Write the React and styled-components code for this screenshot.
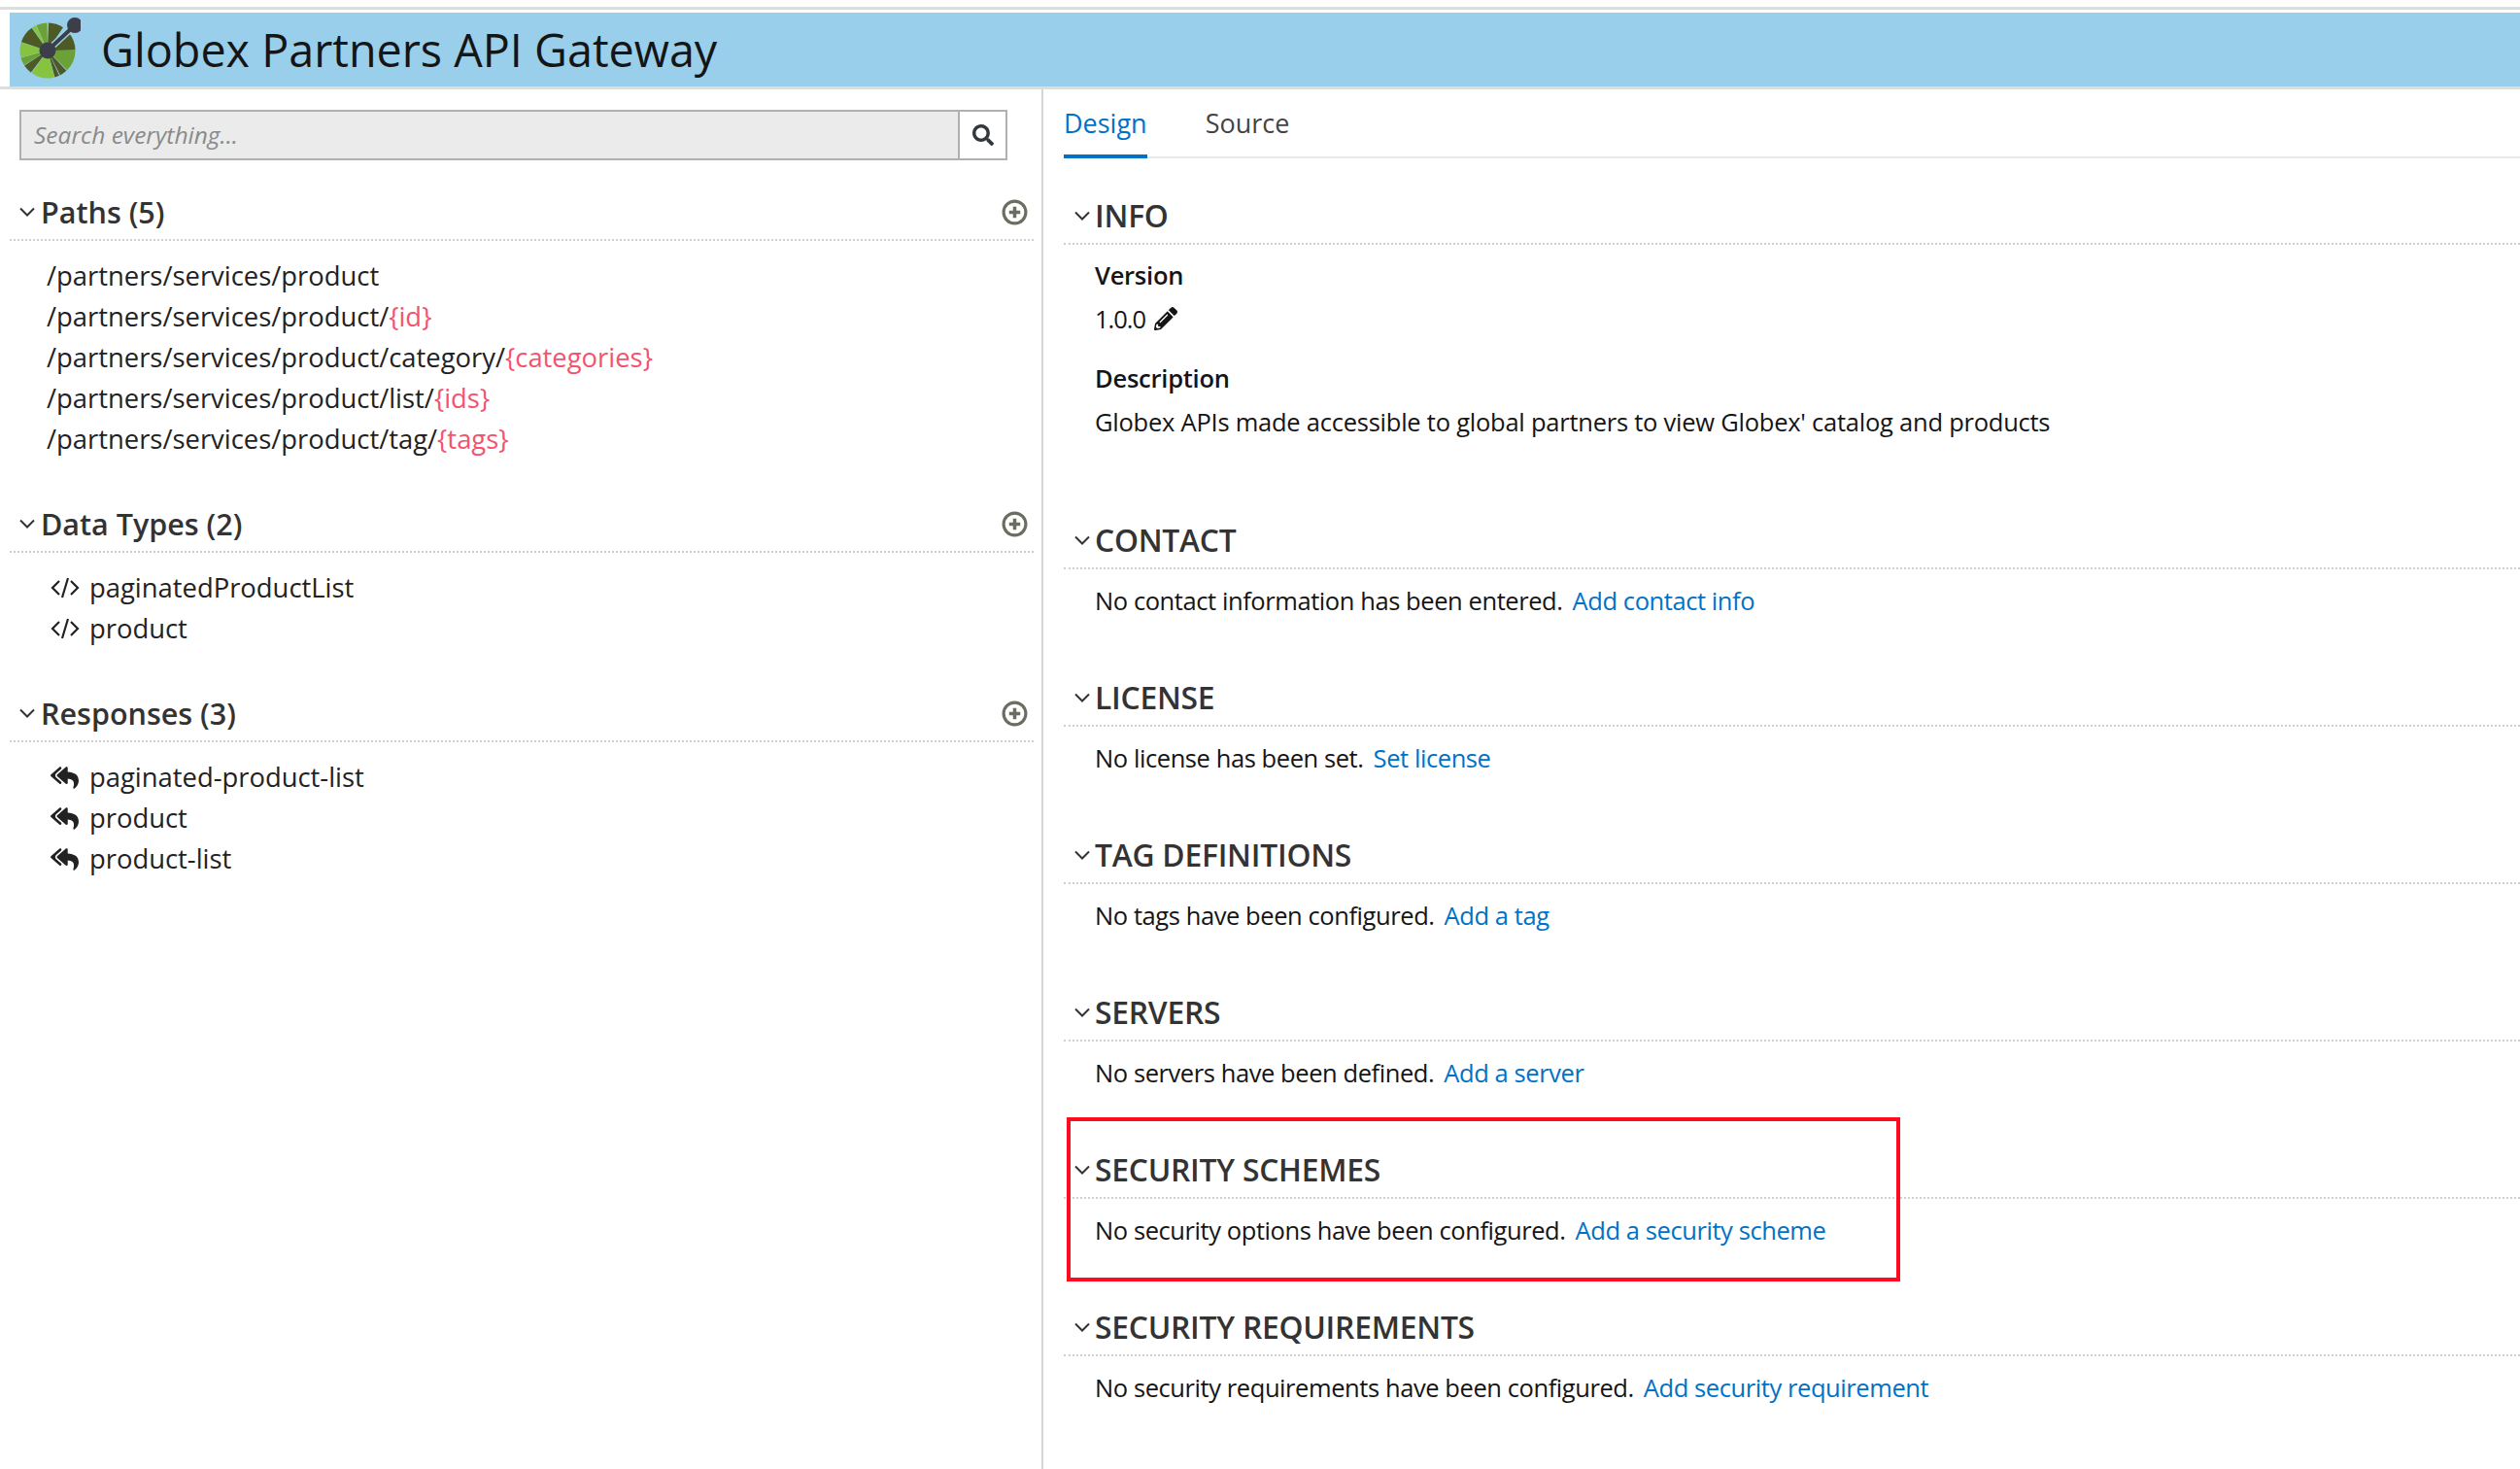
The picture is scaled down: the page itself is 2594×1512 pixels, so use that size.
import styled, { createGlobalStyle } from 'styled-components';
import { FaSearch, FaReplyAll, FaPencilAlt } from 'react-icons/fa';

const FONT = '"Open Sans", "Liberation Sans", sans-serif';

const GlobalStyle = createGlobalStyle`
  html, body {
    margin: 0;
    background: #fff;
  }
  body {
    font-family: ${FONT};
    font-size: 27.4px;
    line-height: 42px;
    color: #151515;
  }
`;

const Page = styled.div`
  height: 1512px;
  overflow: hidden;
  display: flex;
  flex-direction: column;
  padding-top: 7px;
  box-sizing: border-box;
`;

const TopBar = styled.header`
  border-top: 3px solid #dddddd;
  border-bottom: 3px solid #dddddd;
  padding: 3px 0 0 10px;
  flex: none;
`;

const Banner = styled.div`
  height: 76px;
  background: #99cfeb;
  display: flex;
  align-items: center;
  gap: 21px;
  padding-left: 7px;
  font-size: 46.7px;
  color: #151515;
`;

const Body = styled.div`
  flex: 1;
  display: grid;
  grid-template-columns: 1074px 1fr;
`;

const Sidebar = styled.aside`
  border-right: 2px solid #d5d5d5;
  padding: 21px 8px 0 10px;
`;

const Search = styled.div`
  display: flex;
  height: 52px;
  width: 1017px;
  margin: 0 0 27px 10px;
  box-sizing: border-box;
  border: 2px solid #b0b0b0;
`;

const SearchText = styled.div`
  flex: 1;
  background: #ebebeb;
  color: #8a8a8a;
  font-style: italic;
  font-size: 24.5px;
  padding-left: 13px;
  line-height: 48px;
`;

const SearchButton = styled.div`
  width: 47px;
  border-left: 2px solid #b0b0b0;
  display: flex;
  align-items: center;
  justify-content: center;
  color: #33383d;
  font-size: 22px;
`;

const Head = styled.div`
  height: 56px;
  box-sizing: border-box;
  border-bottom: 2px dotted #cfcfcf;
  display: flex;
  align-items: center;
  gap: ${(p) => p.$gap}px;
  padding-left: ${(p) => p.$indent}px;
  padding-bottom: ${(p) => p.$lift}px;
  font-size: ${(p) => p.$size}px;
  font-weight: 600;
  color: #333;
`;

const HeadTitle = styled.span`
  flex: 1;
`;

const AddIcon = styled.svg`
  width: 27px;
  height: 27px;
  margin-right: 6px;
  flex: none;
`;

const Group = styled.section`
  margin-bottom: 40px;
`;

const Rows = styled.div`
  padding: 15px 0 0 38px;
`;

const Row = styled.div`
  display: flex;
  align-items: center;
  height: 42px;
  color: #222;
`;

const Param = styled.span`
  color: #f4536f;
`;

const RowIcon = styled.span`
  width: 40px;
  margin-left: 4px;
  flex: none;
  display: flex;
  align-items: center;
  font-size: 29px;
  color: #222;
`;

const Main = styled.main`
  padding-left: 21px;
`;

const Tabs = styled.nav`
  height: 71px;
  box-sizing: border-box;
  border-bottom: 2px solid #e8e8e8;
  display: flex;
  gap: 60px;
  font-size: 27px;
`;

const Tab = styled.div`
  height: 71px;
  box-sizing: border-box;
  padding-top: 14px;
  color: ${(p) => (p.$active ? '#0072c6' : '#444')};
  border-bottom: ${(p) => (p.$active ? '4px solid #0072c6' : 'none')};
`;

const Sections = styled.div`
  padding-top: 33px;
  font-size: 25.5px;
  letter-spacing: -0.24px;
`;

const Section = styled.section`
  position: relative;
  height: ${(p) => p.$height}px;
`;

const SectionBody = styled.div`
  padding: ${(p) => p.$top}px 0 0 32px;
`;

const Label = styled.div`
  font-weight: 600;
  height: 42px;
`;

const ValueRow = styled.div`
  display: flex;
  align-items: center;
  gap: 9px;
  height: 42px;
  margin: 3px 0 19px;
  letter-spacing: -1px;
  svg {
    font-size: 24px;
  }
`;

const Text = styled.div`
  height: 42px;
  margin-top: 3px;
  white-space: nowrap;
  letter-spacing: ${(p) => (p.$tight ? '-0.42px' : 'inherit')};
`;

const Link = styled.a`
  color: #0072c6;
  margin-left: 10px;
`;

const Highlight = styled.div`
  position: absolute;
  left: 3px;
  top: -28px;
  width: 858px;
  height: 169px;
  box-sizing: border-box;
  border: 4px solid #ff0a1f;
`;

const Chevron = () => (
  <svg width="16" height="10" viewBox="0 0 16 10" fill="none" stroke="#333" strokeWidth="2">
    <path d="M1 1.5 L8 8.5 L15 1.5" />
  </svg>
);

const Plus = () => (
  <AddIcon viewBox="0 0 26 26">
    <circle cx="13" cy="13" r="11" fill="none" stroke="#6a6e60" strokeWidth="3" />
    <path d="M13 7.5 V18.5 M7.5 13 H18.5" stroke="#6a6e60" strokeWidth="3.4" />
  </AddIcon>
);

const CodeIcon = () => (
  <svg width="30" height="22" viewBox="0 0 30 22" fill="none" stroke="#222" strokeWidth="2.2">
    <path d="M9 4 L2 11 L9 18 M21 4 L28 11 L21 18 M18 1 L12 21" />
  </svg>
);

function wedge(a0, a1) {
  const pt = (a, r) => {
    const t = ((a - 90) * Math.PI) / 180;
    return `${(48 + r * Math.cos(t)).toFixed(2)} ${(53 + r * Math.sin(t)).toFixed(2)}`;
  };
  return `M${pt(a0, 6)} L${pt(a0, 28.5)} A28.5 28.5 0 0 1 ${pt(a1, 28.5)} L${pt(a1, 6)} Z`;
}

const DARK = '#4d5a26';
const MID = '#6ba136';
const BRIGHT = '#86c440';

const LOGO_SEGMENTS = [
  [2, 34, DARK], [50, 89, DARK], [90, 135, MID], [137, 153, DARK], [155, 165, DARK],
  [166, 215, BRIGHT], [217, 237, DARK], [238, 255, MID], [256, 287, BRIGHT],
  [288, 325, DARK], [326, 335, BRIGHT], [336, 359, MID],
];

const Logo = () => (
  <svg width="66" height="70" viewBox="16 17 66 70">
    {LOGO_SEGMENTS.map(([a0, a1, fill]) => (
      <path key={a0} d={wedge(a0, a1)} fill={fill} />
    ))}
    <path d="M48 53 L76 27" stroke="#99cfeb" strokeWidth="7" />
    <path d="M48 53 L76 27" stroke="#3c3f4a" strokeWidth="4" />
    <circle cx="48" cy="53" r="8.5" fill="#3c3f4a" />
    <circle cx="76" cy="27" r="8" fill="#3c3f4a" />
  </svg>
);

const PATHS = [
  ['/partners/services/product', ''],
  ['/partners/services/product/', '{id}'],
  ['/partners/services/product/category/', '{categories}'],
  ['/partners/services/product/list/', '{ids}'],
  ['/partners/services/product/tag/', '{tags}'],
];

const EMPTY_SECTIONS = [
  ['CONTACT', 'No contact information has been entered.', 'Add contact info'],
  ['LICENSE', 'No license has been set.', 'Set license'],
  ['TAG DEFINITIONS', 'No tags have been configured.', 'Add a tag'],
  ['SERVERS', 'No servers have been defined.', 'Add a server'],
  ['SECURITY SCHEMES', 'No security options have been configured.', 'Add a security scheme', true],
  ['SECURITY REQUIREMENTS', 'No security requirements have been configured.', 'Add security requirement'],
];

function SideGroup({ title, children }) {
  return (
    <Group>
      <Head $indent={10} $size={30.5} $lift={2} $gap={6}>
        <Chevron />
        <HeadTitle>{title}</HeadTitle>
        <Plus />
      </Head>
      <Rows>{children}</Rows>
    </Group>
  );
}

function App() {
  return (
    <>
      <GlobalStyle />
      <Page>
        <TopBar>
          <Banner>
            <Logo />
            Globex Partners API Gateway
          </Banner>
        </TopBar>
        <Body>
          <Sidebar>
            <Search>
              <SearchText>Search everything...</SearchText>
              <SearchButton>
                <FaSearch />
              </SearchButton>
            </Search>
            <SideGroup title="Paths (5)">
              {PATHS.map(([path, param]) => (
                <Row key={path + param}>
                  {path}
                  <Param>{param}</Param>
                </Row>
              ))}
            </SideGroup>
            <SideGroup title="Data Types (2)">
              {['paginatedProductList', 'product'].map((name) => (
                <Row key={name}>
                  <RowIcon>
                    <CodeIcon />
                  </RowIcon>
                  {name}
                </Row>
              ))}
            </SideGroup>
            <SideGroup title="Responses (3)">
              {['paginated-product-list', 'product', 'product-list'].map((name) => (
                <Row key={name}>
                  <RowIcon>
                    <FaReplyAll />
                  </RowIcon>
                  {name}
                </Row>
              ))}
            </SideGroup>
          </Sidebar>
          <Main>
            <Tabs>
              <Tab $active>Design</Tab>
              <Tab>Source</Tab>
            </Tabs>
            <Sections>
              <Section $height={334}>
                <Head $indent={11} $size={31.8} $lift={3} $gap={5}>
                  <Chevron />
                  INFO
                </Head>
                <SectionBody $top={10}>
                  <Label>Version</Label>
                  <ValueRow>
                    1.0.0
                    <FaPencilAlt />
                  </ValueRow>
                  <Label>Description</Label>
                  <Text>
                    Globex APIs made accessible to global partners to view Globex' catalog and products
                  </Text>
                </SectionBody>
              </Section>
              {EMPTY_SECTIONS.map(([title, text, link, marked]) => (
                <Section key={title} $height={162}>
                  <Head $indent={11} $size={31.8} $lift={3} $gap={5}>
                    <Chevron />
                    {title}
                  </Head>
                  <SectionBody $top={8}>
                    <Text $tight>
                      {text}
                      <Link>{link}</Link>
                    </Text>
                  </SectionBody>
                  {marked && <Highlight />}
                </Section>
              ))}
            </Sections>
          </Main>
        </Body>
      </Page>
    </>
  );
}

export default App;
